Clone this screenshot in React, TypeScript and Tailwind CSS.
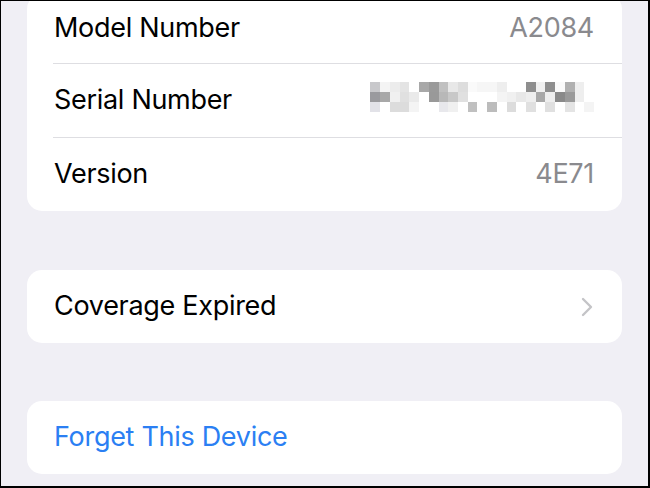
import React from 'react';

const serialPixels: string[][] = [
  ['#c8c8cb', '#f4f4f4', '#ececec', '#e4e4e4', '#ffffff', '#a8a8a8', '#9a9a9a', '#c0c0c0', '#e8e8e8', '#dddddd', '#fafafa', '#f6f6f6', '#f6f6f6', '#eeeeee', '#ffffff', '#ffffff', '#8e8e8e', '#f0f0f0', '#8e8e8e', '#fafafa', '#b0b0b0', '#eeeeee', '#ffffff'],
  ['#9a9a9e', '#a8a8a8', '#f0f0f0', '#e0e0e0', '#eaeaea', '#ffffff', '#999999', '#b8b8b8', '#c8c8c8', '#e0e0e0', '#ffffff', '#ffffff', '#ffffff', '#f4f4f4', '#f0f0f0', '#e8e8e8', '#eeeeee', '#a8a8a8', '#eeeeee', '#8a8a8a', '#9a9a9a', '#eeeeee', '#ffffff'],
  ['#e2e2e8', '#ffffff', '#dcdcdc', '#dcdcdc', '#f4f4f4', '#ffffff', '#ffffff', '#e8e8ec', '#f0f0f0', '#ffffff', '#c0c0c0', '#ffffff', '#bcbcbc', '#ffffff', '#dcdcdc', '#ffffff', '#e0e0e0', '#ffffff', '#e0e0e0', '#ffffff', '#e4e4e4', '#ffffff', '#f4f4f4'],
];

function Row({ label, value, children, className = 'h-[73px]' }: { label: string; value?: string; children?: React.ReactNode; className?: string }) {
  return (
    <div className={`flex items-center justify-between pl-[27px] pr-[28px] ${className}`}>
      <span className="text-black">{label}</span>
      {value && <span className="text-[#8a8a8e]">{value}</span>}
      {children}
    </div>
  );
}

function Separator() {
  return <div className="ml-[26px] h-px bg-[#dedee2]" />;
}

function SerialBlur() {
  return (
    <div className="mb-[8px] grid grid-cols-[repeat(23,9.72px)] grid-rows-[repeat(3,10px)]">
      {serialPixels.flat().map((c, i) => (
        <div key={i} style={{ backgroundColor: c }} />
      ))}
    </div>
  );
}

function Chevron() {
  return (
    <svg width="12" height="20" viewBox="0 0 12 20" fill="none" className="mr-[1px]">
      <polyline points="2,2 10,10 2,18" stroke="#c4c4c7" strokeWidth="2.4" strokeLinecap="round" strokeLinejoin="round" />
    </svg>
  );
}

export default function App() {
  return (
    <div
      className="h-[488px] w-[650px] overflow-hidden border-t border-l border-r-2 border-b-2 border-black bg-[#f0eff5] px-[26px] text-[27px] tracking-[-0.3px]"
      style={{ fontFamily: 'Inter, "Noto Sans", sans-serif' }}
    >
      {/* device info card, scrolled so its top is cut off */}
      <div className="-mt-[7px] rounded-[15px] bg-white">
        <Row label="Model Number" value="A2084" className="h-[69px]" />
        <Separator />
        <Row label="Serial Number">
          <SerialBlur />
        </Row>
        <Separator />
        <Row label="Version" value="4E71" />
      </div>

      <div className="mt-[59px] rounded-[15px] bg-white">
        <Row label="Coverage Expired">
          <Chevron />
        </Row>
      </div>

      <div className="mt-[58px] rounded-[15px] bg-white">
        <div className="flex h-[73px] items-center pl-[27px] text-[#2b7ff3]">Forget This Device</div>
      </div>
    </div>
  );
}
